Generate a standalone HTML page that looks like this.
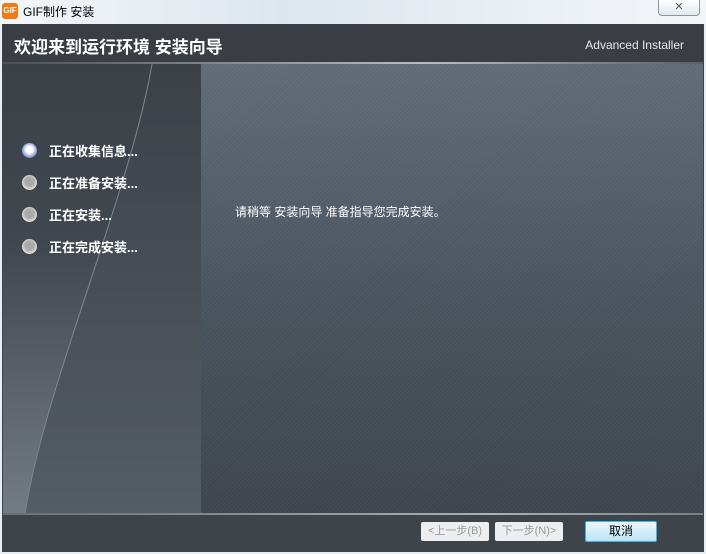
<!DOCTYPE html>
<html><head><meta charset="utf-8"><style>
body{margin:0;width:706px;height:554px;overflow:hidden;background:#e9eef3;font-family:"Liberation Sans","Noto Sans CJK SC",sans-serif;position:relative}
.abs{position:absolute}
</style></head><body>
<div class="abs" style="left:0;top:0;width:706px;height:24px;background:linear-gradient(90deg,#f3f6f9,#dde6ee 40%,#f3f6f9)"></div>
<div class="abs" style="left:2px;top:3px;width:16px;height:16px;background:#f07a14;border-radius:3px;color:#fff;font-size:8px;font-weight:bold;line-height:16px;text-align:center">GIF</div>
<div class="abs" style="left:23px;top:3px;font-size:12px;color:#000">GIF制作 安装</div>
<div class="abs" style="left:658px;top:-2px;width:40px;height:16px;border:1px solid #8a95a0;border-radius:0 0 4px 4px;background:linear-gradient(#fff,#e4e9ee);font-size:11px;text-align:center;color:#555;line-height:16px">✕</div>
<div class="abs" style="left:2px;top:24px;width:702px;height:528px;background:#3f444a"></div>
<div class="abs" style="left:3px;top:24px;width:700px;height:39px;background:#3a3e44"></div>
<div class="abs" style="left:14px;top:33px;font-size:17px;color:#fff;font-weight:bold">欢迎来到运行环境 安装向导</div>
<div class="abs" style="right:22px;top:38px;font-size:12px;color:#e6e8ea">Advanced Installer</div>
<div class="abs" style="left:3px;top:62px;width:700px;height:2px;background:linear-gradient(90deg,#4a4f55,#b8bec4 60%,#5a6068)"></div>
<svg class="abs" style="left:3px;top:64px" width="198" height="450">
<defs>
<linearGradient id="a" x1="0" y1="0" x2="0" y2="1"><stop offset="0" stop-color="#3c4148"/><stop offset="0.4" stop-color="#41474e"/><stop offset="1" stop-color="#737b83"/></linearGradient>
<linearGradient id="b" x1="0" y1="0" x2="0" y2="1"><stop offset="0" stop-color="#3c4148"/><stop offset="1" stop-color="#545c64"/></linearGradient>
</defs>
<rect width="198" height="450" fill="url(#b)"/>
<path d="M0 0 H197 C175 130 90 320 70 450 H0 Z" fill="url(#a)" transform="translate(-48 0)"/>
<path d="M197 0 C175 130 90 320 70 450" stroke="#7d868e" stroke-width="1" fill="none" transform="translate(-48 0)"/>
</svg>
<div class="abs" style="left:201px;top:64px;width:502px;height:450px;background:linear-gradient(#606b76,#4a545e 50%,#3d444c);"></div>
<div class="abs" style="left:201px;top:64px;width:502px;height:450px;background:repeating-linear-gradient(135deg,rgba(255,255,255,.04) 0 1px,transparent 1px 3px)"></div>
<div class="abs" style="left:235px;top:203px;font-size:12px;color:#fff">请稍等 安装向导 准备指导您完成安装。</div>
<div class="abs" style="left:22px;top:143px;width:15px;height:15px;border-radius:50%;background:radial-gradient(circle at 50% 45%,#fff 30%,#9ad 60%,#357 100%)"></div>
<div class="abs" style="left:22px;top:175px;width:15px;height:15px;border-radius:50%;background:radial-gradient(circle at 50% 45%,#aaa 40%,#eee 75%,#888 100%)"></div>
<div class="abs" style="left:22px;top:207px;width:15px;height:15px;border-radius:50%;background:radial-gradient(circle at 50% 45%,#aaa 40%,#eee 75%,#888 100%)"></div>
<div class="abs" style="left:22px;top:239px;width:15px;height:15px;border-radius:50%;background:radial-gradient(circle at 50% 45%,#aaa 40%,#eee 75%,#888 100%)"></div>
<div class="abs" style="left:49px;top:143px;font-size:13px;font-weight:bold;color:#fff;line-height:17px">正在收集信息...</div>
<div class="abs" style="left:49px;top:175px;font-size:13px;font-weight:bold;color:#fff;line-height:17px">正在准备安装...</div>
<div class="abs" style="left:49px;top:207px;font-size:13px;font-weight:bold;color:#fff;line-height:17px">正在安装...</div>
<div class="abs" style="left:49px;top:239px;font-size:13px;font-weight:bold;color:#fff;line-height:17px">正在完成安装...</div>
<div class="abs" style="left:3px;top:513px;width:700px;height:2px;background:linear-gradient(90deg,#6a7078,#aab0b6 70%,#7a8088)"></div>
<div class="abs" style="left:421px;top:522px;width:68px;height:19px;background:#eceeef;border-radius:2px;font-size:11px;color:#999;line-height:19px;text-align:center">&lt;上一步(B)</div>
<div class="abs" style="left:495px;top:522px;width:68px;height:19px;background:#eceeef;border-radius:2px;font-size:11px;color:#999;line-height:19px;text-align:center">下一步(N)&gt;</div>
<div class="abs" style="left:585px;top:521px;width:70px;height:19px;border:1px solid #3fb0e8;background:linear-gradient(#e8f6fe,#bfe4f8);border-radius:2px;font-size:12px;color:#000;line-height:19px;text-align:center">取消</div>
</body></html>
